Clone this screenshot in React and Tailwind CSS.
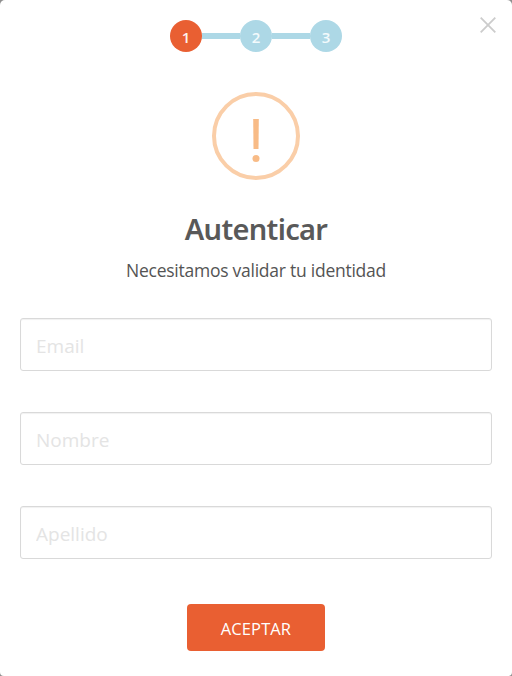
const steps = ['1', '2', '3'];
const fields = ['Email', 'Nombre', 'Apellido'];

function Steps() {
  return (
    <ol className="flex items-center justify-center">
      {steps.map((step, i) => (
        <li key={step} className="flex items-center">
          {i > 0 && <span className="h-[6px] w-[38px] bg-[#add8e6]" />}
          <span
            className={
              i === 0
                ? 'flex h-8 w-8 items-center justify-center rounded-full bg-[#e95f32] pt-[2px] text-[15px] leading-none font-semibold text-[#fdf1ec]'
                : 'flex h-8 w-8 items-center justify-center rounded-full bg-[#add8e6] pt-[2px] text-[15px] leading-none font-semibold text-[#f3fafc]'
            }
          >
            {step}
          </span>
        </li>
      ))}
    </ol>
  );
}

export default function App() {
  return (
    <div className="h-[676px] w-[512px] bg-[#8f8f8f] font-['Open_Sans','Noto_Sans',sans-serif]">
      <div className="relative flex h-full flex-col items-center rounded-t-[5px] rounded-b-[4px] bg-white px-5 pt-5">
        <button type="button" aria-label="Cerrar" className="absolute top-[17px] right-4">
          <svg width="16" height="16" viewBox="0 0 16 16" className="block">
            <path d="M.7.7 15.3 15.3M15.3.7.7 15.3" stroke="#cccccc" strokeWidth="1.8" fill="none" />
          </svg>
        </button>

        <Steps />

        <div className="mt-10 flex h-[88px] w-[88px] items-center justify-center rounded-full border-4 border-[#facea8]">
          <svg width="8" height="44" viewBox="0 0 8 44" className="mt-[8px] block">
            <path d="M1.2 1H6.8L6.5 31H1.5Z" fill="#f8bb86" />
            <circle cx="4" cy="40.5" r="3.5" fill="#f8bb86" />
          </svg>
        </div>

        <h2 className="mt-[29px] font-['Noto_Sans',sans-serif] text-[29px] leading-[40px] font-semibold tracking-[-0.7px] text-[#595959]">
          Autenticar
        </h2>
        <p className="mt-2 text-[17.5px] leading-[26px] tracking-[-0.25px] whitespace-nowrap text-[#545454]">
          Necesitamos validar tu identidad
        </p>

        <form className="mt-[35px] flex w-full flex-col items-center">
          <div className="flex w-full flex-col gap-[41px]">
            {fields.map((field) => (
              <input
                key={field}
                type="text"
                placeholder={field}
                className="h-[53px] w-full rounded-[3px] border border-[#d9d9d9] px-[15px] pt-[3px] text-[19px] shadow-[inset_0_1px_1px_rgba(0,0,0,0.06)] placeholder:text-[#e4e4e4]"
              />
            ))}
          </div>
          <button
            type="button"
            className="mt-[45px] h-[47px] w-[138px] rounded-[4px] bg-[#e95f32] pt-[3px] text-[16.5px] leading-none tracking-[0.1px] text-white"
          >
            ACEPTAR
          </button>
        </form>
      </div>
    </div>
  );
}
